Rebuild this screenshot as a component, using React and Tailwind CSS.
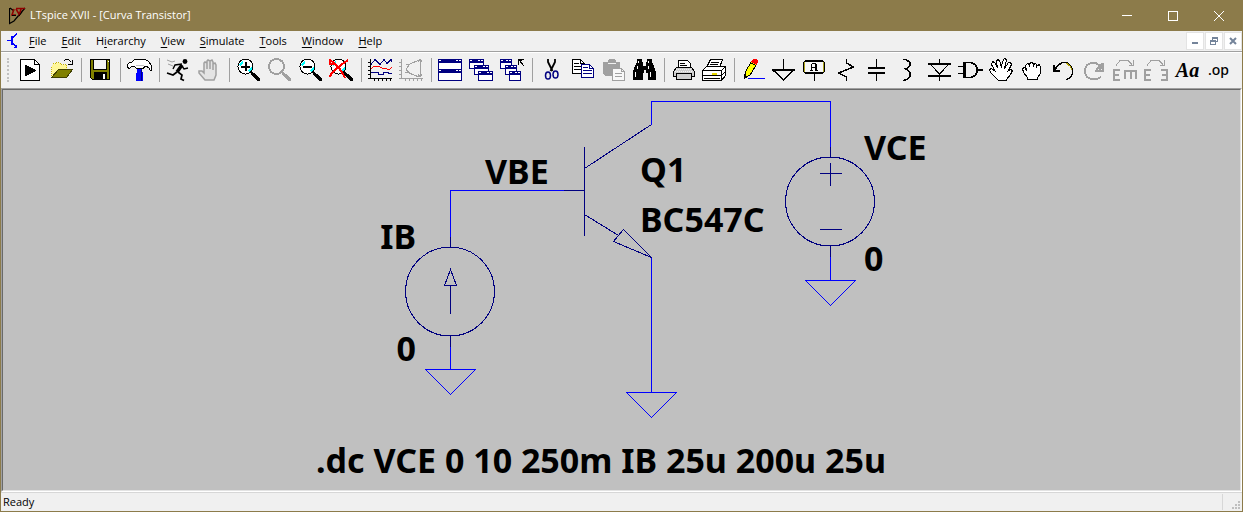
import React from "react";

const navy = "#000080";
const grey = "#a0a0a0";

// Toolbar glyphs are drawn on a 25x24 grid
function Glyph({ children, smooth }) {
  return (
    <svg
      width="25"
      height="24"
      viewBox="0 0 25 24"
      fill="none"
      stroke="#000"
      strokeWidth="1"
      shapeRendering={smooth ? "auto" : "crispEdges"}
      aria-hidden="true"
    >
      {children}
    </svg>
  );
}

function Magnifier({ color = "#000", children }) {
  const active = color === "#000";
  return (
    <Glyph>
      <circle cx="9.5" cy="8.5" r="7.5" fill={active ? "#fff" : "none"} stroke={color} strokeWidth={active ? 1 : 2} />
      {active && <path d="M4 7.5l3-4M13 13.5l3-4M5 5.5l2-2" stroke="#00ffff" strokeWidth="2" />}
      <path d="M15 14h1l7 6v2h-2l-6-6z" fill={color} stroke={color} />
      {children}
    </Glyph>
  );
}

function MiniWindow({ x, y, w = 14, h = 9 }) {
  return (
    <g>
      <rect x={x + 0.5} y={y + 0.5} width={w} height={h} fill="#fff" stroke={navy} />
      <rect x={x} y={y} width={w + 1} height="4" fill={navy} stroke="none" />
      <path d={`M${x + 1} ${y + 1.5}h2M${x + w - 5} ${y + 1.5}h2M${x + w - 2} ${y + 1.5}h2`} stroke="#fff" />
    </g>
  );
}

const icons = {
  run: (
    <Glyph>
      <path d="M2.5 1.5h14l5 5v16h-19z" fill="#fff" />
      <path d="M16.5 1.5v5h5" />
      <path d="M7 6.5L18.5 12.5 7 18.5z" fill="#000" stroke="none" />
    </Glyph>
  ),
  open: (
    <Glyph>
      <path d="M2.5 19.5v-12l2-2h2l1-1h3l2 2h5v13z" fill="#fff799" stroke="#c9b500" strokeDasharray="1 1" />
      <path d="M2.5 19.5l7-8h14l-6 8z" fill="#808000" stroke="#404000" />
      <path d="M14.5 3.5l2-2h3l3 3M23.5 1.5v5h-5" />
    </Glyph>
  ),
  save: (
    <Glyph>
      <path d="M2.5 1.5h19v20h-17l-2-2z" fill="#808000" />
      <rect x="5.5" y="1.5" width="13" height="10" fill="#f4f4f4" />
      <rect x="6" y="14" width="13" height="8" fill="#000" stroke="none" />
      <rect x="15" y="16" width="2" height="5" fill="#fff" stroke="none" />
      <path d="M20 3.5h1" stroke="#fff" />
    </Glyph>
  ),
  hammer: (
    <Glyph>
      <path d="M10 9h5v5l1 1v8H9v-8l1-1z" fill="#0000ff" stroke="none" />
      <path d="M14.5 10v13" stroke="#000080" />
      <path d="M.5 9.5v-3l2-2h2l3-3h11l3 2 3 4v5h-1l-2-3-2-1h-2l-1 2h-7l-2-2h-3l-2 2z" fill="#fff" />
      <path d="M9 7.5h8" stroke="#c0c0c0" />
    </Glyph>
  ),
  runner: (
    <Glyph smooth>
      <circle cx="19" cy="3.5" r="2.4" fill="#000" stroke="none" />
      <path d="M16 7l-5 7" strokeWidth="3.5" />
      <path d="M16 6l-7 1-2 4M16 8l2 3 4-1" strokeWidth="1.4" />
      <path d="M11 14l-4 3-6-2M12 14l4 3-1 4 3 1.5" strokeWidth="1.7" />
      <path d="M1 2l5 2 3-1M2 6l5 2" stroke={grey} />
    </Glyph>
  ),
  halt: (
    <Glyph smooth>
      <path
        d="M8 22l-6-7v-2h3l2 2V5l1-1 2 1v6V3l1-1 2 1v8V3l2-1 1 2v8V6l2-1 1 2v10l-2 5z"
        fill="#e4e4e4"
        stroke={grey}
        strokeWidth="1.5"
      />
    </Glyph>
  ),
  zoomIn: (
    <Magnifier>
      <path d="M5 8.5h9M9.5 4v9" strokeWidth="2" />
    </Magnifier>
  ),
  zoomPan: <Magnifier color={grey} />,
  zoomOut: (
    <Magnifier>
      <path d="M5 9h9" strokeWidth="2" />
    </Magnifier>
  ),
  zoomFull: (
    <Magnifier>
      <path d="M1 2l4 3 5 5 4 6 2 4M19 2l-7 5-6 5-4 4-1 3M1 1v5h4" stroke="#ff0000" strokeWidth="2" />
    </Magnifier>
  ),
  plot: (
    <Glyph>
      <path d="M2.5 1v20M0 20.5h24M0 4.5h3M0 8.5h3M0 12.5h3M0 16.5h3M6.5 20v3M10.5 20v3M14.5 20v3M18.5 20v3M22.5 20v3" />
      <path d="M3 6.5l4-5 5 5 4-5 3 4 4-4 1 2" stroke={navy} />
      <path d="M3 10.5l3-2h5l4 2h2l4 1 3-2" stroke="#ff0000" />
      <path d="M3 14.5h7v2h5v-2h5v1h4" stroke={navy} />
    </Glyph>
  ),
  plotOff: (
    <Glyph>
      <g stroke={grey}>
        <path d="M2.5 1v20M0 20.5h24M0 4.5h3M0 8.5h3M0 12.5h3M0 16.5h3M6.5 20v3M10.5 20v3M14.5 20v3M18.5 20v3M22.5 20v3" />
        <path d="M20 2l-9 4-4 5 3 4 10 4M7 6.5h4M6 14.5h5M21.5 2v16M19 4l2-3 2 3M19 16l2 3 2-3" />
      </g>
    </Glyph>
  ),
  tile: (
    <Glyph>
      <MiniWindow x={0} y={1} w={23} h={10} />
      <MiniWindow x={0} y={11} w={23} h={11} />
    </Glyph>
  ),
  cascade: (
    <Glyph>
      <MiniWindow x={0} y={1} />
      <MiniWindow x={5} y={7} />
      <MiniWindow x={9} y={13} />
    </Glyph>
  ),
  closeAll: (
    <Glyph>
      <MiniWindow x={0} y={1} w={11} />
      <MiniWindow x={5} y={7} w={11} />
      <MiniWindow x={9} y={13} w={11} />
      <path d="M18.5 7V1.5h5M19 2l5 6M19 2.5h3" />
    </Glyph>
  ),
  cut: (
    <Glyph smooth>
      <path d="M9 1v3l4.5 9M16 1v3l-4.5 9" strokeWidth="1.8" />
      <ellipse cx="9" cy="17.5" rx="2.5" ry="3.5" stroke={navy} strokeWidth="1.5" />
      <ellipse cx="16.5" cy="16.5" rx="2.5" ry="3.5" stroke={navy} strokeWidth="1.5" />
    </Glyph>
  ),
  copy: (
    <Glyph>
      <path d="M2.5 1.5h8l4 4v10h-12z" fill="#fff" />
      <path d="M10.5 1.5v4h4M4 5.5h5M4 8.5h7M4 11.5h7" />
      <path d="M11.5 6.5h8l4 4v9h-12z" fill="#fff" stroke={navy} />
      <path d="M19.5 6.5v4h4M13 9.5h5M13 12.5h9M13 15.5h9" stroke={navy} />
    </Glyph>
  ),
  paste: (
    <Glyph>
      <path d="M2 4h5V2l2-1h4l2 1v2h4v14H4l-2-2z" fill={grey} stroke="none" />
      <path d="M7 5.5h8" stroke="#f0f0f0" />
      <path d="M11.5 10.5h9l3 3v9h-12z" fill="#f8f8f8" stroke={grey} />
      <path d="M20.5 10.5v3h3M14 15.5h7M14 18.5h7" stroke={grey} />
    </Glyph>
  ),
  find: (
    <Glyph>
      <path
        d="M5 1h5v3h1v4h3V4h1V1h5v3l2 4 2 6v8h-8v-7h-2v-3h-2v3h-1v7H1v-8l2-6 2-4z"
        fill="#000"
        stroke="none"
      />
      <path d="M6.5 3v2M16.5 3v2M5.5 8v3M16.5 8v3M3.5 14v5M18.5 14v5" stroke="#fff" />
    </Glyph>
  ),
  print: (
    <Glyph>
      <path d="M7.5 10.5v-8h9l3 3v5z" fill="#fff" />
      <path d="M5.5 9.5h15l3 4v5h-3v3h-15v-3h-3v-5z" fill="#d0d0d0" />
      <path d="M5.5 18.5v-3h15v3M9 5.5h5M9 7.5h7" />
      <path d="M5 11.5h16M4 13.5h18" stroke="#f4f4f4" strokeDasharray="1 1" />
    </Glyph>
  ),
  printSetup: (
    <Glyph>
      <path d="M4.5 9.5l4-8h12l-3 8z" fill="#fff" />
      <path d="M9 4.5h8M8 6.5h8" />
      <path d="M.5 12.5l4-4h19v9l-4 5h-19z" fill="#fff" />
      <path d="M.5 12.5h19v10M19.5 12.5l4-4M.5 17.5h19M19.5 17.5l4-4M2 20.5h16" />
      <path d="M10 15.5h5" stroke="#e6d800" strokeWidth="2" />
    </Glyph>
  ),
  wire: (
    <Glyph>
      <path d="M3.5 20.5l1-7 6-10 5 3-6 10z" fill="#ffff00" />
      <path d="M10 4l2-3h3l2 2-1 4z" fill="#ff0000" stroke="none" />
      <path d="M3 21v-5l4 3z" fill="#000" stroke="none" />
      <path d="M9.5 4.5l5 3" />
      <path d="M7 20.5h17" stroke="#0000ff" />
    </Glyph>
  ),
  ground: (
    <Glyph>
      <path d="M11.5 1v11" />
      <path d="M0 12h23" strokeWidth="2" />
      <path d="M1 12l10.5 10L22 12" strokeWidth="1.5" />
    </Glyph>
  ),
  label: (
    <Glyph>
      <path d="M2.5 2.5h17l2 2v9l-2 2h-17l-2-2v-9z" fill="#f8f8f8" />
      <path d="M2 3.5h18M2 14.5h18" />
      <path d="M1.5 4v10M20.5 4v10" stroke="#b0a620" />
      <path d="M8.5 13V6.5l1-1h3l1 1V13M8 9.5h6M7 12.5h3M12 12.5h3" />
      <path d="M12.5 6v7" />
      <path d="M11.5 16v7" />
    </Glyph>
  ),
  resistor: (
    <Glyph>
      <path d="M12.5 1v4l7 4-15 6 8 4v4" strokeWidth="1.5" />
    </Glyph>
  ),
  capacitor: (
    <Glyph>
      <path d="M11.5 1v8M11.5 15v8" />
      <path d="M3 10h17M3 15h17" strokeWidth="2" />
    </Glyph>
  ),
  inductor: (
    <Glyph>
      <path d="M7 1.5h3l4 3v3l-3 3H8M9 11.5h2l3 3v4l-3 3-4 1" strokeWidth="1.5" />
    </Glyph>
  ),
  diode: (
    <Glyph>
      <path d="M12.5 1v5M12.5 17v6M3 6l9.5 10L22 6" />
      <path d="M1 6h23M1 17.5h23" strokeWidth="2" />
    </Glyph>
  ),
  gate: (
    <Glyph>
      <path d="M6 4.5h7l4 2 2 3v5l-2 3-4 2H6zM7 4v16" strokeWidth="1.5" />
      <path d="M0 8.5h6M0 15.5h6" />
      <path d="M19 12h6" strokeWidth="2" />
    </Glyph>
  ),
  move: (
    <Glyph>
      <path
        d="M9.5 22.5l-3-3-5-5-1-3 2-1 4 3-4-7 1-3 2 1 3 5-1-6 1-2 2 1 2 7 1-6 2-3 2 1-2 9 4-6h2l1 2-3 6 2-1 2 1-2 4-4 5v1z"
        fill="#fff"
      />
    </Glyph>
  ),
  drag: (
    <Glyph>
      <path
        d="M7.5 21.5v-2l-4-5-1-4 2-1 2 3-1-5 2-2 2 1 1-2h2l1 2 2-1 2 2 2-1 1 3v6l-3 4v2z"
        fill="#fff"
      />
      <path d="M9.5 6v3M13.5 6v3M16.5 7v3" />
    </Glyph>
  ),
  undo: (
    <Glyph>
      <path d="M3.5 12.5l3-5 5-3h4l4 3 2 4v4l-2 4-4 2" strokeWidth="1.5" />
      <path d="M15 5l4 3 2 4" stroke="#b0a000" />
      <path d="M2.5 7v6h6" strokeWidth="2" />
    </Glyph>
  ),
  redo: (
    <Glyph>
      <g stroke={grey} strokeWidth="2">
        <path d="M18 8l-4-3H9L5 7l-2 4v4l2 4 4 2h6l4-2" />
        <path d="M21 5v8h-8M14 12l6-6M17 12l4-4" />
      </g>
    </Glyph>
  ),
  mirror: (
    <Glyph>
      <g stroke={grey}>
        <path d="M3 7.5l4-5h8l4 4M20.5 2v5h-5" />
        <path d="M7 12H1v10h6M1 17h5M12 21v-8h11v8M17.5 13v8" strokeWidth="2" />
      </g>
    </Glyph>
  ),
  rotate: (
    <Glyph>
      <g stroke={grey}>
        <path d="M3 7.5l4-5h8l4 4M20.5 2v5h-5" />
        <path d="M7 12H1v10h6M1 17h5M17 12h6v10h-6M23 17h-5" strokeWidth="2" />
      </g>
    </Glyph>
  ),
};

const toolGroups = [
  [["run", "Run"], ["open", "Open"]],
  [["save", "Save"]],
  [["hammer", "Control Panel"]],
  [["runner", "Simulate"], ["halt", "Halt"]],
  [["zoomIn", "Zoom in"], ["zoomPan", "Pan"], ["zoomOut", "Zoom out"], ["zoomFull", "Zoom full extents"]],
  [["plot", "Autorange"], ["plotOff", "Plot settings"]],
  [["tile", "Tile windows"], ["cascade", "Cascade windows"], ["closeAll", "Close all"]],
  [["cut", "Cut"], ["copy", "Copy"], ["paste", "Paste"], ["find", "Find"]],
  [["print", "Print"], ["printSetup", "Print setup"]],
  [
    ["wire", "Wire"],
    ["ground", "Ground"],
    ["label", "Label net"],
    ["resistor", "Resistor"],
    ["capacitor", "Capacitor"],
    ["inductor", "Inductor"],
    ["diode", "Diode"],
    ["gate", "Component"],
    ["move", "Move"],
    ["drag", "Drag"],
    ["undo", "Undo"],
    ["redo", "Redo"],
    ["mirror", "Mirror"],
    ["rotate", "Rotate"],
  ],
];

const menuItems = ["File", "Edit", "Hierarchy", "View", "Simulate", "Tools", "Window", "Help"];

function MenuLabel({ text }) {
  const at = text === "Hierarchy" ? 1 : 0;
  return (
    <>
      {text.slice(0, at)}
      <span className="underline underline-offset-2">{text[at]}</span>
      {text.slice(at + 1)}
    </>
  );
}

function TitleBar() {
  return (
    <header className="flex h-[31px] items-center bg-[#8c7b4a] pl-2 text-white">
      <svg width="18" height="18" viewBox="0 0 18 18" fill="none" aria-hidden="true">
        <path d="M.5 1v15.5L5 14l5-6 6-7M1 1l4 3" stroke="#000" strokeWidth="1.2" />
        <path d="M5 2L3 8h4M7 1.5h9M12 2l-2 7M7 2l3 5" stroke="#900000" strokeWidth="1.6" />
        <path d="M3 8.5h4M10 9l3-4" stroke="#000" />
      </svg>
      <h1 className="ml-[3px] text-[11px]">LTspice XVII - [Curva Transistor]</h1>
      <div className="ml-auto flex h-full">
        <button aria-label="Minimize" className="flex w-[46px] items-center justify-center">
          <span className="h-px w-[10px] bg-white" />
        </button>
        <button aria-label="Maximize" className="flex w-[46px] items-center justify-center">
          <span className="h-[10px] w-[10px] border border-white" />
        </button>
        <button aria-label="Close" className="flex w-[46px] items-center justify-center">
          <svg width="10" height="10" viewBox="0 0 10 10" stroke="#fff" aria-hidden="true">
            <path d="M0 0l10 10M10 0L0 10" />
          </svg>
        </button>
      </div>
    </header>
  );
}

function MenuBar() {
  const childButton = "flex h-[18px] w-[18px] items-center justify-center border border-[#e3e3e3] bg-white";
  return (
    <nav className="flex h-5 items-center bg-[#f0f0f0] pl-[6px]">
      <svg
        width="12"
        height="16"
        viewBox="0 0 12 16"
        stroke="#0000ff"
        fill="none"
        shapeRendering="crispEdges"
        aria-hidden="true"
      >
        <path d="M0 7.5h4M10 .5l-5 5M5 9.5l5 5" />
        <path d="M5 3v9" strokeWidth="2" />
        <path d="M10 11v4H7z" fill="#0000ff" stroke="none" />
      </svg>
      <div className="ml-[10px] flex gap-[15px]">
        {menuItems.map((item) => (
          <button key={item} className="text-[11px]">
            <MenuLabel text={item} />
          </button>
        ))}
      </div>
      <div className="ml-auto flex gap-px">
        <button aria-label="Minimize document" className={childButton}>
          <span className="mt-1 h-[2px] w-[6px] bg-[#74849a]" />
        </button>
        <button aria-label="Restore document" className={childButton}>
          <svg width="8" height="8" viewBox="0 0 8 8" fill="none" stroke="#74849a" shapeRendering="crispEdges" aria-hidden="true">
            <path d="M2.5 3V.5h5v4H6M2 1.5h5M.5 3.5h5v4h-5zM0 4.5h6" />
          </svg>
        </button>
        <button aria-label="Close document" className={childButton}>
          <svg width="8" height="8" viewBox="0 0 8 8" stroke="#74849a" strokeWidth="2" aria-hidden="true">
            <path d="M1 1l6 6M7 1L1 7" />
          </svg>
        </button>
      </div>
    </nav>
  );
}

function ToolBar() {
  const button = "flex w-[31px] shrink-0 items-center justify-center";
  return (
    <div
      role="toolbar"
      className="flex h-[37px] border-t border-[#a0a0a0] bg-[#f0f0f0] py-[6px] shadow-[inset_0_1px_0_#ffffff]"
    >
      <div className="mx-[6px] w-[2px] shrink-0 border-l-2 border-dotted border-[#c0c0c0]" />
      {toolGroups.map((group, i) => (
        <React.Fragment key={group[0][0]}>
          {i > 0 && <div className="mx-[3px] w-[2px] shrink-0 border-r border-[#a0a0a0]" />}
          {group.map(([id, label]) => (
            <button key={id} aria-label={label} className={button}>
              {icons[id]}
            </button>
          ))}
        </React.Fragment>
      ))}
      <button className={`${button} font-['Liberation_Serif',serif] text-xl leading-6 font-bold italic`}>Aa</button>
      <button className={`${button} font-['Noto_Sans',sans-serif] text-sm leading-6 font-medium`}>.op</button>
    </div>
  );
}

function Ground({ x, y }) {
  return <path d={`M${x - 25} ${y}h50l-25 25z`} stroke="#0000ff" />;
}

function CurrentSource({ x, y }) {
  return (
    <g transform={`translate(${x} ${y})`} stroke={navy}>
      <circle cx="-0.5" r="44.5" />
      <path d="M0 -55V-44M0 44V55M0 22V-6M0 -22L6 -6H-6z" />
    </g>
  );
}

function VoltageSource({ x, y }) {
  return (
    <g transform={`translate(${x} ${y})`} stroke={navy}>
      <circle cx="-0.5" r="44.5" />
      <path d="M0 -55V-44M0 44V55M-11 -28H11M0 -39V-16M-11 28H11" />
    </g>
  );
}

// NPN symbol, origin at the middle of the base bar
function Npn({ x, y }) {
  return (
    <g transform={`translate(${x} ${y})`} stroke={navy}>
      <path d="M-21 0H0M0 -44V45M0 -22L67 -66M0 24L34 45M39 39L29 51L67 67z" />
    </g>
  );
}

const labels = [
  { text: "VBE", x: 482, y: 93 },
  { text: "IB", x: 413, y: 158, anchor: "end" },
  { text: "0", x: 413, y: 270, anchor: "end" },
  { text: "Q1", x: 637, y: 91 },
  { text: "BC547C", x: 637, y: 141 },
  { text: "VCE", x: 861, y: 69 },
  { text: "0", x: 861, y: 180 },
  { text: ".dc VCE 0 10 250m IB 25u 200u 25u", x: 313, y: 382 },
];

function Schematic() {
  return (
    <main className="flex min-h-0 flex-1 border border-t-[#a0a0a0] border-r-white border-b-white border-l-[#a0a0a0]">
      <div className="min-w-0 flex-1 overflow-hidden border border-t-[#696969] border-r-[#e3e3e3] border-b-[#e3e3e3] border-l-[#696969] bg-[#c0c0c0] pt-px">
        <svg className="block h-full w-full" fill="none" shapeRendering="crispEdges">
          <g transform="translate(0.5 0.5)">
            <path d="M447 145V99H560M648 33V10H827V55M827 165V189M447 255V278M648 166V301" stroke="#0000ff" />
            <CurrentSource x={447} y={200} />
            <VoltageSource x={827} y={110} />
            <Npn x={581} y={99} />
            <Ground x={447} y={278} />
            <Ground x={648} y={301} />
            <Ground x={827} y={189} />
          </g>
          <g className="fill-black font-['Noto_Sans',sans-serif] text-[34px] font-bold">
            {labels.map(({ text, x, y, anchor }) => (
              <text key={`${text}-${x}`} x={x} y={y} textAnchor={anchor}>
                {text}
              </text>
            ))}
          </g>
        </svg>
      </div>
    </main>
  );
}

function StatusBar() {
  return (
    <footer className="flex h-[19px] items-center border-t border-[#d7d7d7] bg-[#f0f0f0] pl-[2px] text-[11px]">
      <span>Ready</span>
      <span className="mr-[9px] ml-auto h-4 w-px bg-[#d7d7d7]" />
      <svg width="8" height="8" viewBox="0 0 8 8" fill="#bfbfbf" className="mr-[2px] mb-[2px] self-end" aria-hidden="true">
        <path d="M6 0h2v2H6zM3 3h2v2H3zM6 3h2v2H6zM0 6h2v2H0zM3 6h2v2H3zM6 6h2v2H6z" />
      </svg>
    </footer>
  );
}

export default function App() {
  return (
    <div className="flex h-screen flex-col overflow-hidden border-r border-b border-l border-[#8c7b4a] bg-[#f0f0f0] font-['Open_Sans',sans-serif] text-black">
      <TitleBar />
      <MenuBar />
      <ToolBar />
      <Schematic />
      <StatusBar />
    </div>
  );
}
